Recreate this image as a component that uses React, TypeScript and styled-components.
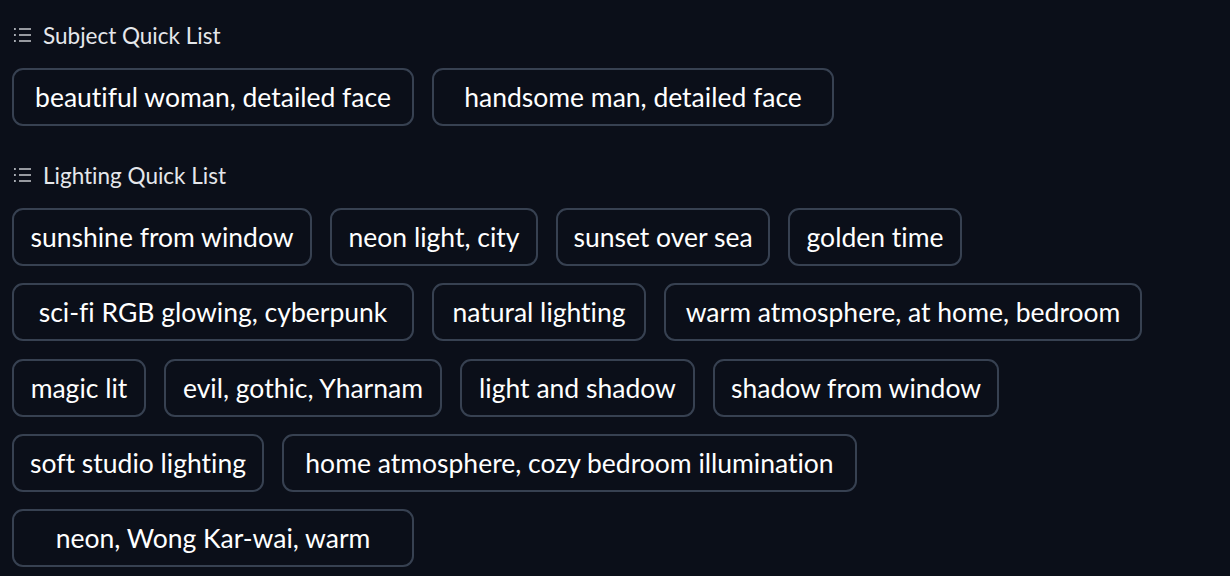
import styled, { createGlobalStyle } from "styled-components";

const GlobalStyle = createGlobalStyle`
    html, body {
        margin: 0;
        padding: 0;
        background: #0b0f19;
    }
`;

const Page = styled.div`
    width: 1230px;
    height: 576px;
    overflow: hidden;
    background: #0b0f19;
    color: #f3f4f6;
    font-family: Lato, "Liberation Sans", sans-serif;
    font-variant-ligatures: none;
    padding: 24px 12px 0 12px;
    box-sizing: border-box;
`;

const Block = styled.section`
    display: flex;
    flex-direction: column;
    gap: 22px;
    margin-bottom: 38px;
`;

const Label = styled.div`
    display: flex;
    align-items: center;
    gap: 11px;
    height: 22px;
    padding-left: 2px;
    font-size: 22.5px;
    color: #e5e7eb;
`;

const Chips = styled.div`
    display: flex;
    flex-direction: column;
    row-gap: 17.3px;
`;

const Row = styled.div`
    display: flex;
    gap: 18px;
`;

const Chip = styled.button<{ $w: number }>`
    width: ${(p) => p.$w}px;
    height: 58px;
    box-sizing: border-box;
    display: flex;
    align-items: center;
    justify-content: center;
    padding: 0 8px;
    background: #0b0f19;
    border: 2px solid #374151;
    border-radius: 11px;
    color: #ffffff;
    font-family: inherit;
    font-variant-ligatures: none;
    font-size: 26.5px;
    white-space: nowrap;
    cursor: pointer;
`;

function ListIcon() {
    return (
        <svg width="18" height="16" viewBox="0 0 18 16">
            <g fill="#d1d5db">
                <rect x="0" y="1.2" width="1.8" height="1.6" />
                <rect x="0" y="7.2" width="1.8" height="1.6" />
                <rect x="0" y="13.2" width="1.8" height="1.6" />
            </g>
            <g stroke="#e5e7eb" strokeWidth="1.3">
                <line x1="5" y1="2" x2="17" y2="2" />
                <line x1="5" y1="8" x2="17" y2="8" />
                <line x1="5" y1="14" x2="17" y2="14" />
            </g>
        </svg>
    );
}

type Item = { t: string; w: number };

// each inner array is one row as it wraps in the reference
const subject: Item[][] = [
    [
        { t: "beautiful woman, detailed face", w: 402 },
        { t: "handsome man, detailed face", w: 402 },
    ],
];

const lighting: Item[][] = [
    [
        { t: "sunshine from window", w: 300 },
        { t: "neon light, city", w: 208 },
        { t: "sunset over sea", w: 214 },
        { t: "golden time", w: 174 },
    ],
    [
        { t: "sci-fi RGB glowing, cyberpunk", w: 402 },
        { t: "natural lighting", w: 214 },
        { t: "warm atmosphere, at home, bedroom", w: 478 },
    ],
    [
        { t: "magic lit", w: 134 },
        { t: "evil, gothic, Yharnam", w: 278 },
        { t: "light and shadow", w: 235 },
        { t: "shadow from window", w: 286 },
    ],
    [
        { t: "soft studio lighting", w: 252 },
        { t: "home atmosphere, cozy bedroom illumination", w: 575 },
    ],
    [{ t: "neon, Wong Kar-wai, warm", w: 402 }],
];

function QuickList({ title, rows }: { title: string; rows: Item[][] }) {
    return (
        <Block>
            <Label>
                <ListIcon />
                {title}
            </Label>
            <Chips>
                {rows.map((row, r) => (
                    <Row key={r}>
                        {row.map((c) => (
                            <Chip key={c.t} $w={c.w}>
                                {c.t}
                            </Chip>
                        ))}
                    </Row>
                ))}
            </Chips>
        </Block>
    );
}

export default function App() {
    return (
        <Page>
            <GlobalStyle />
            <QuickList title="Subject Quick List" rows={subject} />
            <QuickList title="Lighting Quick List" rows={lighting} />
        </Page>
    );
}
